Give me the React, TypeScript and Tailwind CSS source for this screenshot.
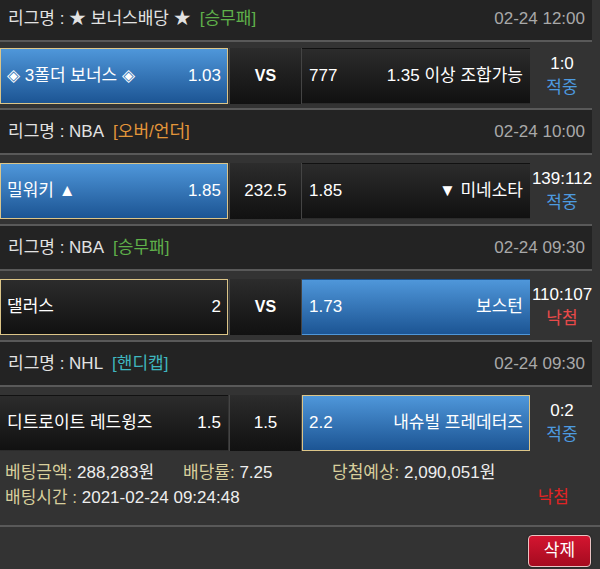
import React from "react";

type Side = {
  left: string;
  right: string;
  blue?: boolean;
  picked?: boolean;
};

type Match = {
  league: string;
  tag: string;
  tagColor: string;
  date: string;
  home: Side;
  mid: string;
  midBold?: boolean;
  away: Side;
  score: string;
  result: string;
  resultColor: string;
};

const matches: Match[] = [
  {
    league: "리그명 : ★ 보너스배당 ★",
    tag: "[승무패]",
    tagColor: "text-[#5fb04a]",
    date: "02-24 12:00",
    home: { left: "◈ 3폴더 보너스 ◈", right: "1.03", blue: true, picked: true },
    mid: "VS",
    midBold: true,
    away: { left: "777", right: "1.35 이상 조합가능" },
    score: "1:0",
    result: "적중",
    resultColor: "text-[#4d9be0]",
  },
  {
    league: "리그명 : NBA",
    tag: "[오버/언더]",
    tagColor: "text-[#e3963a]",
    date: "02-24 10:00",
    home: { left: "밀워키 ▲", right: "1.85", blue: true, picked: true },
    mid: "232.5",
    away: { left: "1.85", right: "▼ 미네소타" },
    score: "139:112",
    result: "적중",
    resultColor: "text-[#4d9be0]",
  },
  {
    league: "리그명 : NBA",
    tag: "[승무패]",
    tagColor: "text-[#5fb04a]",
    date: "02-24 09:30",
    home: { left: "댈러스", right: "2", picked: true },
    mid: "VS",
    midBold: true,
    away: { left: "1.73", right: "보스턴", blue: true },
    score: "110:107",
    result: "낙첨",
    resultColor: "text-[#e84a4a]",
  },
  {
    league: "리그명 : NHL",
    tag: "[핸디캡]",
    tagColor: "text-[#3fb6bf]",
    date: "02-24 09:30",
    home: { left: "디트로이트 레드윙즈", right: "1.5" },
    mid: "1.5",
    away: { left: "2.2", right: "내슈빌 프레데터즈", blue: true, picked: true },
    score: "0:2",
    result: "적중",
    resultColor: "text-[#4d9be0]",
  },
];

const font = {
  fontFamily: '"Liberation Sans", "Noto Sans CJK KR", "DejaVu Sans", sans-serif',
};

const OddsCell = ({ side }: { side: Side }) => {
  const bg = side.blue
    ? "bg-gradient-to-b from-[#4f97da] to-[#1c5594]"
    : "bg-gradient-to-b from-[#2c2c2c] to-[#111111]";
  const border = side.picked ? "border border-[#dcc588]" : "border border-transparent";
  return (
    <div
      className={`w-[228px] h-[56px] flex items-center justify-between px-[6px] text-[17px] text-white ${bg} ${border}`}
    >
      <span>{side.left}</span>
      <span>{side.right}</span>
    </div>
  );
};

const MatchBlock = ({ m, first }: { m: Match; first: boolean }) => {
  return (
    <div>
      <div
        className={`w-[592px] bg-[#232323] border-b-2 border-[#595959] flex items-center justify-between pl-[8px] pr-[7px] text-[17px] ${
          first ? "h-[44px]" : "h-[47px] border-t-2"
        }`}
      >
        <div className="text-[#e2e2e2]">
          {m.league}
          <span className={`ml-[9px] ${m.tagColor}`}>{m.tag}</span>
        </div>
        <div className="text-[#a9a9a9]">{m.date}</div>
      </div>
      <div className={`flex items-start ${first ? "h-[66px] pt-[6px]" : "h-[69px] pt-[8px]"}`}>
        <OddsCell side={m.home} />
        <div className="ml-[1px] w-[73px] h-[56px] border-l border-r border-[#444] bg-gradient-to-b from-[#2c2c2c] to-[#111111] flex items-center justify-center text-white">
          <span className={m.midBold ? "font-bold text-[16px]" : "text-[17px]"}>{m.mid}</span>
        </div>
        <OddsCell side={m.away} />
        <div className="w-[64px] h-[56px] flex flex-col items-center justify-center leading-[24px] text-[17px]">
          <span className="text-white whitespace-nowrap">{m.score}</span>
          <span className={m.resultColor}>{m.result}</span>
        </div>
      </div>
    </div>
  );
};

export default function App() {
  return (
    <div className="w-[600px] h-[569px] overflow-hidden bg-[#333333]" style={font}>
      <div className="-mt-[2px]">
        {matches.map((m, i) => (
          <MatchBlock key={i} m={m} first={i === 0} />
        ))}
      </div>

      <div className="pt-[4px] pb-[15px] pl-[5px] text-[17px] leading-[25px] border-b-2 border-[#595959]">
        <div className="flex">
          <div className="w-[178px]">
            <span className="text-[#d8cf9c]">베팅금액:</span>
            <span className="text-[#eeeeee]"> 288,283원</span>
          </div>
          <div className="w-[149px]">
            <span className="text-[#d8cf9c]">배당률:</span>
            <span className="text-[#eeeeee]"> 7.25</span>
          </div>
          <div>
            <span className="text-[#d8cf9c]">당첨예상:</span>
            <span className="text-[#eeeeee]"> 2,090,051원</span>
          </div>
        </div>
        <div className="flex justify-between pr-[31px]">
          <div>
            <span className="text-[#d8cf9c]">배팅시간 :</span>
            <span className="text-[#eeeeee]"> 2021-02-24 09:24:48</span>
          </div>
          <span className="text-[#e02424]">낙첨</span>
        </div>
      </div>

      <div className="flex justify-end pt-[8px] pr-[9px]">
        <button className="w-[63px] h-[32px] rounded-[4px] border border-[#e9c3c3] bg-gradient-to-b from-[#d41530] to-[#a50b20] text-white text-[17px] shadow-[0_0_2px_rgba(0,0,0,0.6)]">
          삭제
        </button>
      </div>
    </div>
  );
}
